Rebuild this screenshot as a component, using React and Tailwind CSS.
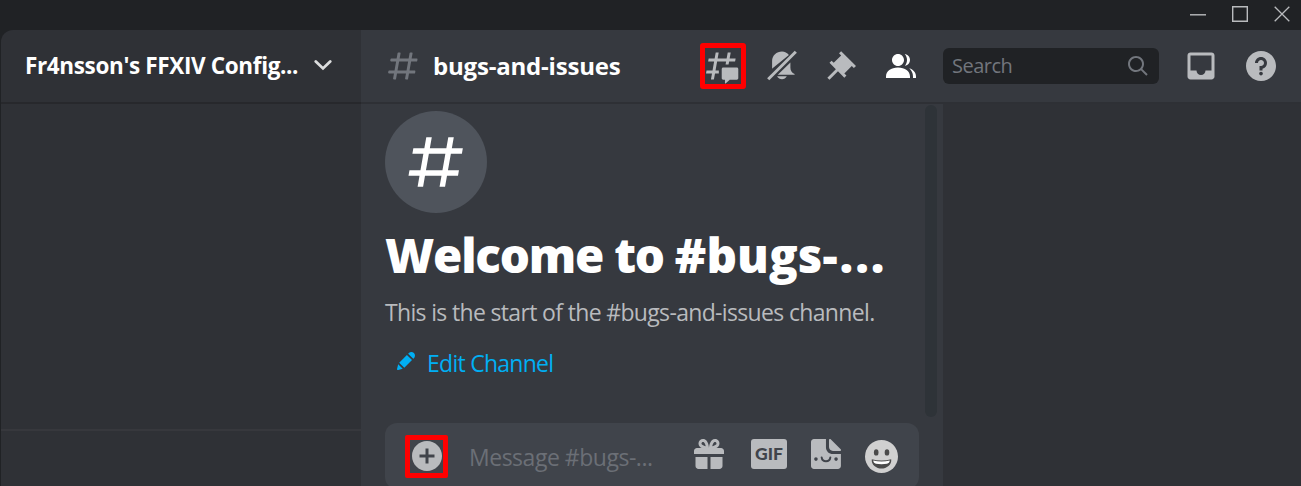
const HASH = "M5.88657 21C5.57547 21 5.3399 20.7189 5.39427 20.4126L6.00001 17H2.59511C2.28449 17 2.04905 16.7198 2.10259 16.4138L2.27759 15.4138C2.31946 15.1746 2.52722 15 2.77011 15H6.35001L7.41001 9H4.00511C3.69449 9 3.45905 8.71977 3.51259 8.41381L3.68759 7.41381C3.72946 7.17456 3.93722 7 4.18011 7H7.76001L8.39677 3.41262C8.43914 3.17391 8.64664 3 8.88907 3H9.87344C10.1845 3 10.4201 3.28107 10.3657 3.58738L9.76001 7H15.76L16.3968 3.41262C16.4391 3.17391 16.6466 3 16.8891 3H17.8734C18.1845 3 18.4201 3.28107 18.3657 3.58738L17.76 7H21.1649C21.4755 7 21.711 7.28023 21.6574 7.58619L21.4824 8.58619C21.4406 8.82544 21.2328 9 20.9899 9H17.41L16.35 15H19.7549C20.0655 15 20.301 15.2802 20.2474 15.5862L20.0724 16.5862C20.0306 16.8254 19.8228 17 19.5799 17H16L15.3632 20.5874C15.3209 20.8261 15.1134 21 14.8709 21H13.8866C13.5755 21 13.3399 20.7189 13.3943 20.4126L14 17H8.00001L7.36325 20.5874C7.32088 20.8261 7.11337 21 6.87094 21H5.88657ZM9.41045 9L8.35045 15H14.3504L15.4104 9H9.41045Z";
const HASH_SQUARE = "M5.31 21L6 17H2L2.35 15H6.35L7.41 9H3.41L3.76 7H7.76L8.47 3H10.47L9.76 7H15.76L16.47 3H18.47L17.76 7H21.76L21.41 9H17.41L16.35 15H20.35L20 17H16L15.29 21H13.29L14 17H8L7.31 21H5.31ZM9.41 9L8.35 15H14.35L15.41 9H9.41Z";
const THREADS = "M5.43309 21C5.35842 21 5.30189 20.9325 5.31494 20.859L5.99991 17H2.14274C2.06819 17 2.01168 16.9327 2.02453 16.8593L2.33253 15.0993C2.34258 15.0419 2.39244 15 2.45074 15H6.34991L7.40991 9H3.55274C3.47819 9 3.42168 8.93274 3.43453 8.85931L3.74253 7.09931C3.75258 7.04189 3.80244 7 3.86074 7H7.75991L8.45234 3.09903C8.46251 3.04174 8.51231 3 8.57049 3H10.3267C10.4014 3 10.4579 3.06746 10.4449 3.14097L9.75991 7H15.7599L16.4523 3.09903C16.4625 3.04174 16.5123 3 16.5705 3H18.3267C18.4014 3 18.4579 3.06746 18.4449 3.14097L17.7599 7H21.6171C21.6916 7 21.7481 7.06725 21.7353 7.14069L21.4273 8.90069C21.4172 8.95811 21.3674 9 21.3091 9H17.4099L17.0495 11.04H15.05L15.4104 9H9.41035L8.35035 15H10.5599V17H7.99991L7.30749 20.901C7.29732 20.9583 7.24752 21 7.18934 21H5.43309Z M13.4399 12.96C12.9097 12.96 12.4799 13.3898 12.4799 13.92V20.2213C12.4799 20.7515 12.9097 21.1813 13.4399 21.1813H14.3999C14.5325 21.1813 14.6399 21.2887 14.6399 21.4213V23.4597C14.6399 23.6677 14.8865 23.7773 15.0408 23.6378L17.4858 21.4289C17.6622 21.2695 17.8916 21.1813 18.1294 21.1813H22.5599C23.0901 21.1813 23.5199 20.7515 23.5199 20.2213V13.92C23.5199 13.3898 23.0901 12.96 22.5599 12.96H13.4399Z";
const PIN = "M22 12L12.101 2.10101L10.686 3.51401L12.101 4.92901L7.15096 9.87801V9.88001L5.73596 8.46501L4.32196 9.88001L8.56496 14.122L2.90796 19.778L4.32196 21.192L9.97896 15.536L14.222 19.778L15.636 18.364L14.222 16.95L19.171 12H19.172L20.586 13.414L22 12Z";
const MEMBERS = "M14 8.00598C14 10.211 12.206 12.006 10 12.006C7.795 12.006 6 10.211 6 8.00598C6 5.80098 7.794 4.00598 10 4.00598C12.206 4.00598 14 5.80098 14 8.00598ZM2 19.006C2 15.473 5.29 13.006 10 13.006C14.711 13.006 18 15.473 18 19.006V20.006H2V19.006Z M20.0001 20.006H22.0001V19.006C22.0001 16.4433 20.2697 14.4415 17.5213 13.5352C19.0621 14.9127 20.0001 16.8059 20.0001 19.006V20.006Z M14.8834 11.9077C16.6657 11.5044 18.0001 9.9077 18.0001 8.00598C18.0001 5.96916 16.4693 4.28218 14.4971 4.0367C15.4322 5.09511 16.0001 6.48524 16.0001 8.00598C16.0001 9.44888 15.4889 10.7742 14.6378 11.8102C14.7203 11.8418 14.8022 11.8743 14.8834 11.9077Z";
const INBOX = "M19 3H4.99C3.88 3 3.01 3.89 3.01 5L3 19C3 20.1 3.88 21 4.99 21H19C20.1 21 21 20.1 21 19V5C21 3.89 20.1 3 19 3ZM19 15H15C15 16.66 13.65 18 12 18C10.35 18 9 16.66 9 15H4.99V5H19V15Z";
const HELP = "M12 2C6.486 2 2 6.487 2 12C2 17.515 6.486 22 12 22C17.514 22 22 17.515 22 12C22 6.487 17.514 2 12 2ZM12 18.25C11.31 18.25 10.75 17.691 10.75 17C10.75 16.31 11.31 15.75 12 15.75C12.69 15.75 13.25 16.31 13.25 17C13.25 17.691 12.69 18.25 12 18.25ZM13 13.875V15H11V12H12C13.104 12 14 11.103 14 10C14 8.896 13.104 8 12 8C10.896 8 10 8.896 10 10H8C8 7.795 9.795 6 12 6C14.205 6 16 7.795 16 10C16 11.861 14.723 13.429 13 13.875Z";
const LENS = "M21.707 20.293L16.314 14.9C17.403 13.504 18 11.799 18 10C18 7.863 17.167 5.854 15.656 4.344C14.146 2.832 12.137 2 10 2C7.863 2 5.854 2.832 4.344 4.344C2.833 5.854 2 7.863 2 10C2 12.137 2.833 14.146 4.344 15.656C5.854 17.168 7.863 18 10 18C11.799 18 13.504 17.404 14.9 16.314L20.293 21.706L21.707 20.293ZM10 16C8.397 16 6.891 15.376 5.758 14.243C4.624 13.11 4 11.603 4 10C4 8.398 4.624 6.891 5.758 5.758C6.891 4.624 8.397 4 10 4C11.603 4 13.109 4.624 14.242 5.758C15.376 6.891 16 8.398 16 10C16 11.603 15.376 13.11 14.242 14.243C13.109 15.376 11.603 16 10 16Z";
const PENCIL = "M19.2929 9.8299L19.9409 9.18278C21.353 7.77064 21.353 5.47197 19.9409 4.05892C18.5287 2.64678 16.2292 2.64678 14.817 4.05892L14.1699 4.70694L19.2929 9.8299ZM12.8962 5.97688L5.18469 13.6906L10.3085 18.813L18.0201 11.0992L12.8962 5.97688ZM4.11851 20.9704L8.75906 19.8112L4.18692 15.239L3.02678 19.8796C2.95028 20.1856 3.04028 20.5105 3.26349 20.7337C3.48669 20.9569 3.8116 21.046 4.11851 20.9704Z";
const PLUS = "M12 2C6.486 2 2 6.486 2 12C2 17.514 6.486 22 12 22C17.514 22 22 17.514 22 12C22 6.486 17.514 2 12 2ZM17 13H13V17H11V13H7V11H11V7H13V11H17V13Z";
const GIFT = "M16.886 7.999H20C21.104 7.999 22 8.896 22 9.999V11.999H2V9.999C2 8.896 2.897 7.999 4 7.999H7.114C6.663 7.764 6.236 7.477 5.879 7.121C4.709 5.951 4.709 4.048 5.879 2.879C7.012 1.746 8.986 1.746 10.121 2.877C11.758 4.514 11.979 7.595 11.998 7.941L11.99 7.998H12.01L12.002 7.942C12.022 7.596 12.242 4.515 13.879 2.878C15.014 1.745 16.986 1.746 18.121 2.877C19.29 4.049 19.29 5.952 18.121 7.121C17.764 7.477 17.337 7.764 16.886 7.999ZM7.293 5.707C6.903 5.316 6.903 4.682 7.293 4.292C7.481 4.103 7.732 4 8 4C8.268 4 8.519 4.103 8.707 4.292C9.297 4.882 9.641 5.94 9.825 6.822C8.945 6.639 7.879 6.293 7.293 5.707ZM14.174 6.824C14.359 5.941 14.702 4.883 15.293 4.293C15.481 4.103 15.732 4 16 4C16.268 4 16.519 4.103 16.706 4.291C17.096 4.682 17.097 5.316 16.707 5.707C16.116 6.298 15.057 6.642 14.174 6.824ZM3 13.999H11V21.999H5C3.897 21.999 3 21.102 3 19.999V13.999ZM13 13.999V21.999H19C20.104 21.999 21 21.102 21 19.999V13.999H13Z";

function Icon({ d, className }) {
  return (
    <svg viewBox="0 0 24 24" className={`shrink-0 ${className}`} fill="currentColor">
      <path fillRule="evenodd" clipRule="evenodd" d={d} />
    </svg>
  );
}

function MutedBell() {
  return (
    <svg viewBox="0 0 24 24" className="size-9 shrink-0" fill="currentColor">
      <path d="M16.6 4.7C15.5 3.2 13.8 2.3 12 2.3C8.4 2.3 5.4 5 5.4 8.6V13.1C5.4 13.4 5.4 13.6 5.3 13.9L16.6 4.7Z" />
      <path d="M17.6 9.7V13.1C17.6 14.9 18.6 16.6 20.4 17.3V17.9H9.2L17.6 9.7Z" />
      <path d="M8.7 18.9H15.2C14.5 20.1 13.3 20.9 12 20.9C10.6 20.9 9.4 20.1 8.7 18.9Z" />
      <path d="M20.6 1.2L22.6 3.1L3.5 22.1L1.4 20.3Z" className="fill-[#36393f]" />
      <path d="M20.5 1.8L21.9 3.1L3.5 21.5L2.1 20.2Z" />
    </svg>
  );
}

function TitleBar() {
  return (
    <div className="flex h-[30px] shrink-0 justify-end gap-[26px] bg-[#202225] pr-[11px] text-[#b9bbbe]">
      <svg className="mt-1.5 h-4 w-4" viewBox="0 0 16 16" fill="none" stroke="currentColor" strokeWidth="1.4">
        <path d="M0 8.8H16" />
      </svg>
      <svg className="mt-1.5 h-4 w-4" viewBox="0 0 16 16" fill="none" stroke="currentColor" strokeWidth="1.4">
        <path d="M.7.7H15.3V15.3H.7Z" />
      </svg>
      <svg className="mt-1.5 h-4 w-4" viewBox="0 0 16 16" fill="none" stroke="currentColor" strokeWidth="1.3">
        <path d="M.7.7L15.3 15.3M15.3.7L.7 15.3" />
      </svg>
    </div>
  );
}

function Sidebar() {
  return (
    <aside className="flex w-[360px] shrink-0 flex-col rounded-tl-xl bg-[#2f3136]">
      <div className="flex h-[72px] items-center pl-6 shadow-[0_2px_0_#27282c]">
        <h2 className="w-[289px] whitespace-nowrap text-[22.5px] font-bold tracking-[-0.36px] text-white">
          Fr4nsson's FFXIV Config...
        </h2>
        <svg className="mb-0.5 h-3 w-[18px]" viewBox="0 0 18 12" fill="none" stroke="#dcddde" strokeWidth="2.8" strokeLinecap="round">
          <path d="M1.8 2.4L9 9.4L16.2 2.4" />
        </svg>
      </div>
      <div className="flex-1" />
      <div className="h-[57px] border-t-2 border-[#37383d]" />
    </aside>
  );
}

function Header() {
  return (
    <header className="flex h-[72px] shrink-0 items-center pl-6 text-[#b9bbbe] shadow-[0_2px_0_#2e3035]">
      <Icon d={HASH} className="size-9 text-[#72767d]" />
      <h1 className="ml-3 w-[267px] whitespace-nowrap text-[24px] font-bold tracking-[-0.2px] text-white">
        bugs-and-issues
      </h1>
      <div className="flex size-[46px] items-center justify-center rounded-[3px] border-5 border-[#fe0000]">
        <Icon d={THREADS} className="mr-1 size-9" />
      </div>
      <div className="ml-[18px] flex gap-6">
        <MutedBell />
        <Icon d={PIN} className="-ml-px size-9" />
        <Icon d={MEMBERS} className="size-9 text-white" />
      </div>
      <div className="ml-6 flex h-9 w-[216px] items-center justify-between rounded-md bg-[#202225] pr-[9px] pl-[9px] text-[#72767d]">
        <span className="text-[20px] tracking-[-0.5px]">Search</span>
        <Icon d={LENS} className="size-6" />
      </div>
      <Icon d={INBOX} className="ml-6 size-9" />
      <Icon d={HELP} className="ml-6 size-9" />
    </header>
  );
}

function Sticker() {
  return (
    <svg viewBox="0 0 20 20" className="size-[30px] shrink-0" fill="currentColor">
      <path d="M12.0002 0.662583V5.40204C12.0002 6.83974 13.1605 7.99981 14.5986 7.99981H19.3393C19.9245 7.99981 20.222 7.29584 19.8055 6.8794L13.1209 0.196569C12.7043 -0.219868 12.0002 0.0676718 12.0002 0.662583Z" />
      <path d="M14.5759 10.0282C12.0336 10.0282 9.96986 7.96441 9.96986 5.42209V0.0583083H1.99397C0.897287 0.0583083 0 0.955595 0 2.05228V18.0041C0 19.1007 0.897287 19.998 1.99397 19.998H17.9457C19.0424 19.998 19.9397 19.1007 19.9397 18.0041V10.0282H14.5759Z" />
      <g className="fill-[#40444b]">
        <circle cx="3.3" cy="13.4" r="1.2" />
        <circle cx="16.7" cy="13.4" r="1.2" />
      </g>
      <path d="M7.1 12.3C7.5 15.7 12.5 15.7 12.9 12.3" fill="none" stroke="#40444b" strokeWidth="1.3" strokeLinecap="round" />
    </svg>
  );
}

function Smiley() {
  return (
    <svg viewBox="0 0 33 33" className="size-[33px] shrink-0">
      <circle cx="16.5" cy="16.5" r="16.5" fill="#d0d0d0" />
      <ellipse cx="11.2" cy="12.4" rx="2.3" ry="3.2" fill="#4a4a4a" />
      <ellipse cx="22" cy="12.4" rx="2.3" ry="3.2" fill="#4a4a4a" />
      <path d="M6.8 19.2C13 20.8 20 20.8 26.2 19.2C27 24.7 21.5 28.6 16.5 28.6C11.5 28.6 6 24.7 6.8 19.2Z" fill="#4a4a4a" />
      <path d="M8.2 20.5C13.5 21.8 19.5 21.8 24.8 20.5C24.6 22.3 23.5 23.4 22 23.8C18.5 24.4 14.5 24.4 11 23.8C9.5 23.4 8.4 22.3 8.2 20.5Z" fill="#fff" />
    </svg>
  );
}

function Composer() {
  return (
    <div className="flex h-[66px] w-[534px] shrink-0 items-center rounded-xl bg-[#40444b] pl-5 text-[#b9bbbe]">
      <div className="flex size-[43px] items-center justify-center rounded-[2px] border-5 border-[#fe0000]">
        <Icon d={PLUS} className="size-9" />
      </div>
      <span className="ml-[21px] w-[222px] whitespace-nowrap pt-0.5 text-[23px] tracking-[-0.48px] text-[#6b6f76]">
        Message #bugs-...
      </span>
      <Icon d={GIFT} className="mb-1 size-9" />
      <div className="mb-1 ml-6 flex h-[30px] w-9 items-center justify-center rounded-[3px] bg-[#b9bbbe] font-['Lato',sans-serif] text-[17.5px] font-black text-[#40444b]">
        GIF
      </div>
      <div className="mb-1 ml-6">
        <Sticker />
      </div>
      <div className="ml-6">
        <Smiley />
      </div>
    </div>
  );
}

function Chat() {
  return (
    <main className="flex w-[582px] shrink-0 flex-col pl-6">
      <div className="flex h-[321px] shrink-0 justify-between">
        <div className="pt-[9px]">
          <div className="flex size-[102px] items-center justify-center rounded-full bg-[#4f545c]">
            <Icon d={HASH_SQUARE} className="size-[66px] text-white" />
          </div>
          <h1 className="mt-3 h-[60px] whitespace-nowrap text-[47.5px] leading-[60px] font-extrabold tracking-[-1.25px] text-white">
            Welcome to <span className="tracking-[0.1px]">#bugs</span>
            <span className="tracking-[1.9px]">-...</span>
          </h1>
          <p className="mt-3 h-[30px] whitespace-nowrap text-[23px] leading-[30px] tracking-[-0.66px] text-[#b9bbbe]">
            This is the start of the #bugs-and-issues channel.
          </p>
          <div className="mt-[21px] flex h-[30px] items-center pl-[9px] text-[#00aff4]">
            <Icon d={PENCIL} className="mb-[5px] size-6" />
            <span className="ml-[9px] text-[23px] leading-[30px] font-medium tracking-[-0.73px] whitespace-nowrap">Edit Channel</span>
          </div>
        </div>
        <div className="mt-[3px] mr-1.5 h-[312px] w-3 shrink-0 rounded-full bg-[#2e3338]" />
      </div>
      <Composer />
    </main>
  );
}

export default function App() {
  return (
    <div className="flex h-[486px] w-[1301px] flex-col overflow-hidden bg-[#202225] font-['Open_Sans',sans-serif]">
      <TitleBar />
      <div className="flex min-h-0 flex-1 pl-px">
        <Sidebar />
        <div className="flex flex-1 flex-col bg-[#36393f]">
          <div className="relative z-10">
            <Header />
          </div>
          <div className="flex min-h-0 flex-1">
            <Chat />
            <aside className="flex-1 bg-[#2f3136]" />
          </div>
        </div>
      </div>
    </div>
  );
}
